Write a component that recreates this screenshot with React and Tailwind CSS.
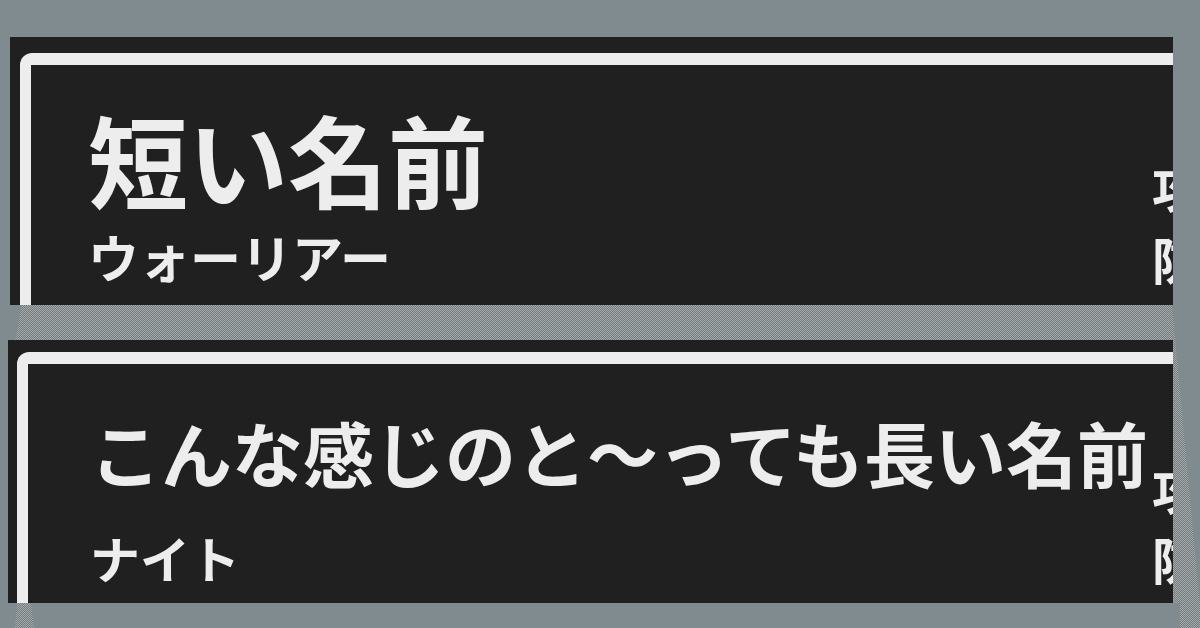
import React from "react";

const jp = { fontFamily: '"Noto Sans CJK JP", "Noto Sans", sans-serif' };

// Checkered backdrop sitting under the two cards
function Backdrop() {
  return (
    <svg className="absolute inset-0" width="1200" height="628" viewBox="0 0 1200 628">
      <defs>
        <pattern id="checker" width="2" height="2" patternUnits="userSpaceOnUse">
          <rect width="2" height="2" fill="#727c7e" />
          <rect x="0" y="0" width="1" height="1" fill="#a6aaaa" />
          <rect x="1" y="1" width="1" height="1" fill="#a6aaaa" />
        </pattern>
      </defs>
      <polygon
        points="22,305 1172,305 1202,628 1180,628 1180,603 31,603 34,628 15,628 17,603 15,340"
        fill="url(#checker)"
      />
    </svg>
  );
}

function Card({ outer, cardPad, name, nameClass, nameBox, job, jobClass, jobBox, leftW, padL, statBox }) {
  return (
    <div className={`bg-[#202020] overflow-hidden ${outer}`}>
      <div className={`${cardPad} h-full`}>
        <div className="w-[1300px] h-[400px] border-l-[11px] border-t-[12px] border-[#ededed] rounded-tl-[12px] flex text-[#ededed] font-bold">
          <div className={`${leftW} ${padL} shrink-0 flex flex-col`}>
            <div className={`${nameClass} ${nameBox} leading-none whitespace-nowrap`}>{name}</div>
            <div className={`${jobClass} ${jobBox} leading-none whitespace-nowrap`}>{job}</div>
          </div>
          <div className={`flex flex-col text-[50px] leading-none whitespace-nowrap ${statBox}`}>
            <div>攻撃 120</div>
            <div>防御 85</div>
          </div>
        </div>
      </div>
    </div>
  );
}

export default function App() {
  return (
    <div className="relative w-[1200px] h-[628px] overflow-hidden bg-[#7f8b8e]" style={jp}>
      <Backdrop />
      <div className="relative flex flex-col pt-[37px]">
        <Card
          outer="ml-[10px] w-[1163px] h-[268px]"
          cardPad="pl-[10px] pt-[16px]"
          name="短い名前"
          nameClass="text-[100px]"
          nameBox="mt-[43px]"
          job="ウォーリアー"
          jobClass="text-[51px]"
          jobBox="mt-[23px]"
          leftW="w-[1121px]"
          padL="pl-[57px]"
          statBox="mt-[96px] gap-[22px]"
        />
        <Card
          outer="ml-[8px] mt-[35px] w-[1165px] h-[263px]"
          cardPad="pl-[9px] pt-[12px]"
          name="こんな感じのと〜っても長い名前"
          nameClass="text-[71px]"
          nameBox="mt-[52px]"
          job="ナイト"
          jobClass="text-[50px]"
          jobBox="mt-[45px]"
          leftW="w-[1124px]"
          padL="pl-[62px]"
          statBox="mt-[99px] gap-[20px]"
        />
      </div>
    </div>
  );
}
